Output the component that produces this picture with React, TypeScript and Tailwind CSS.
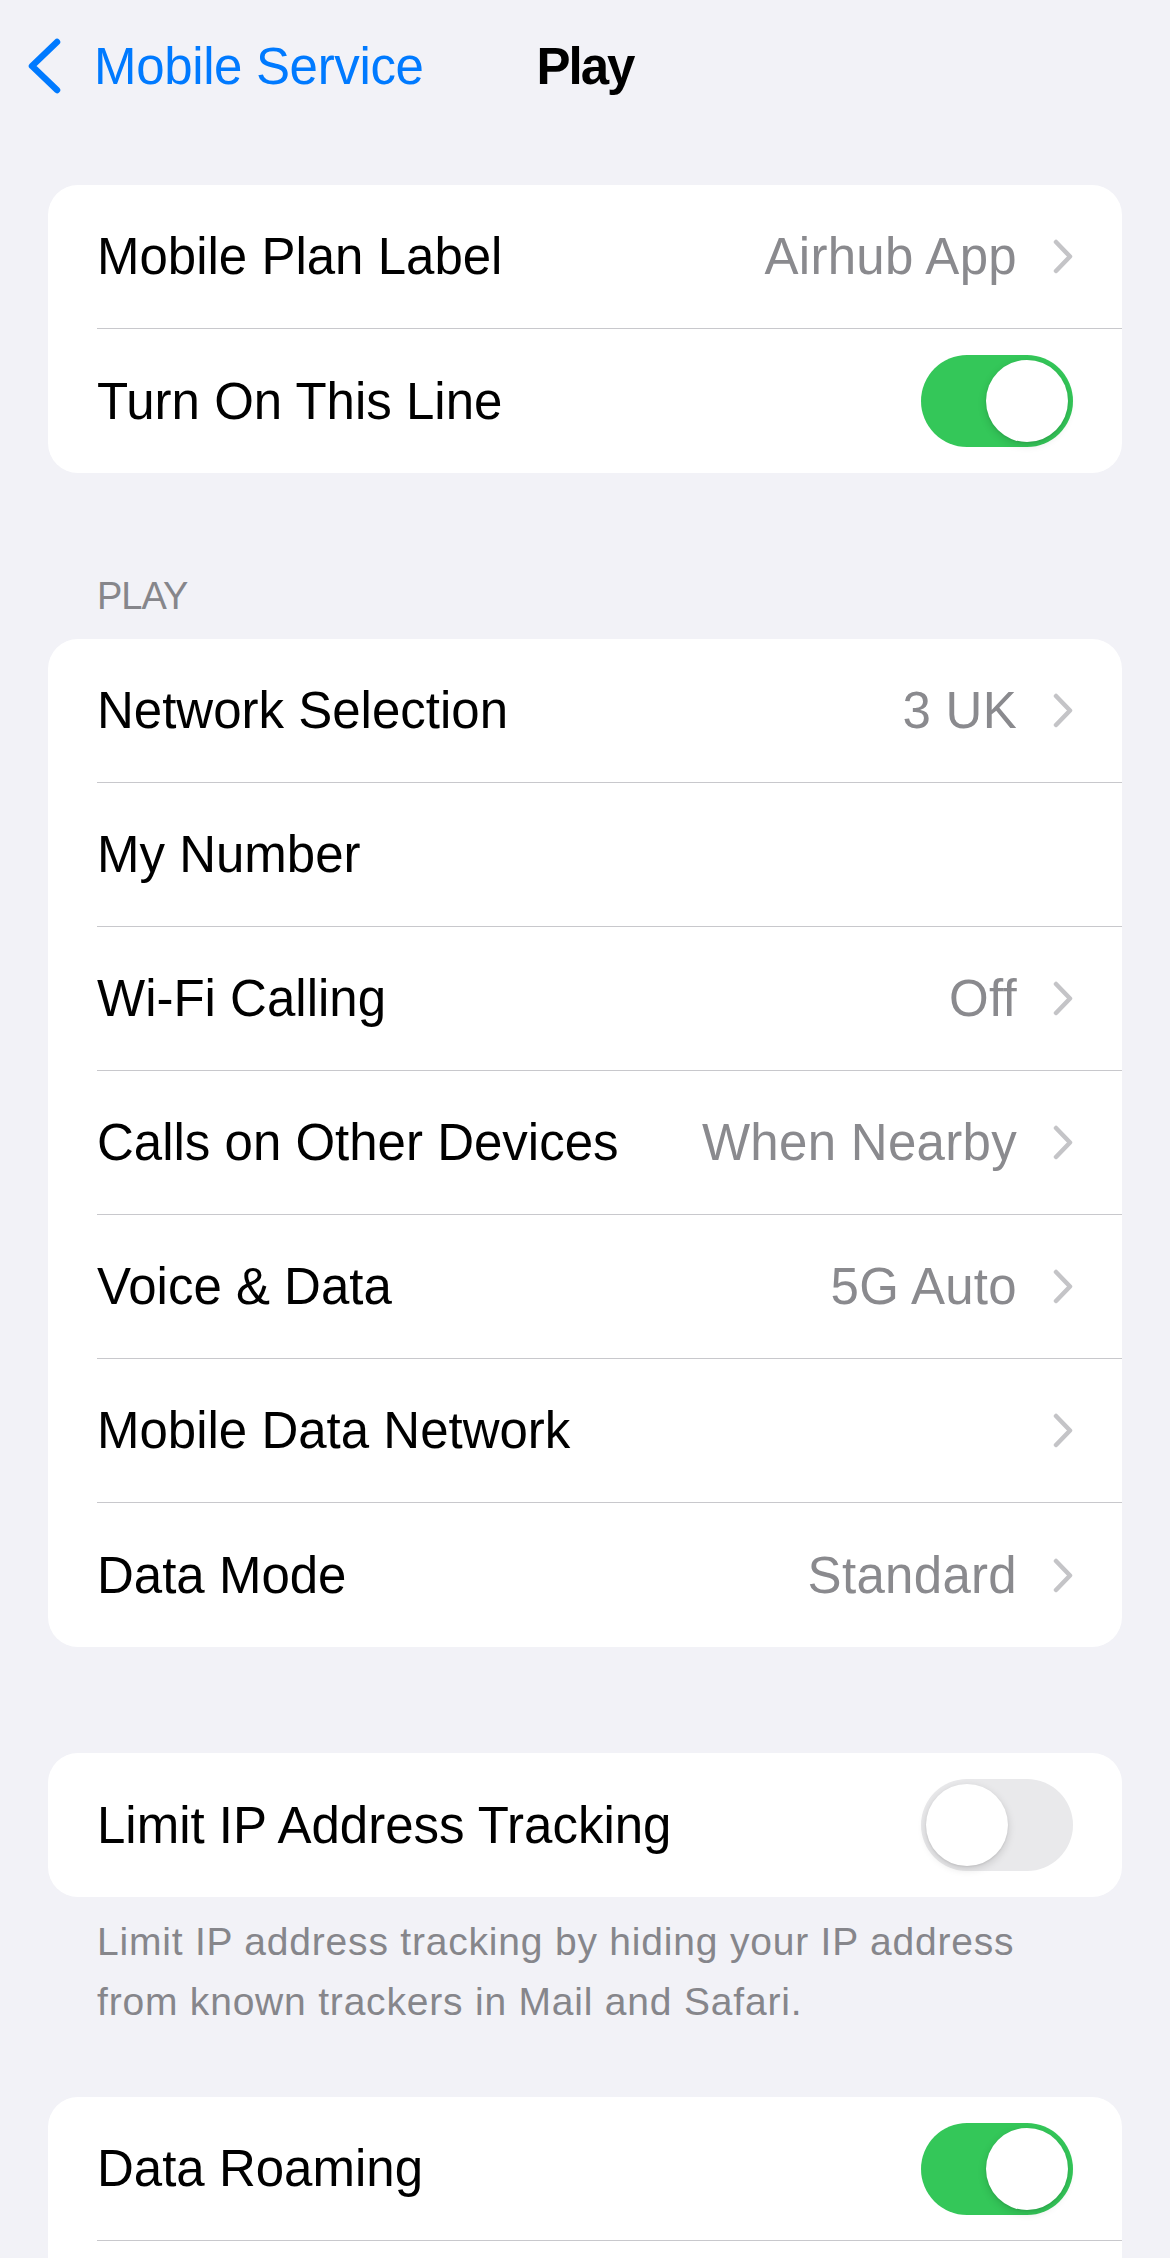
import type { ReactNode } from "react"

const font = { fontFamily: '"Liberation Sans", Arial, sans-serif' }

function Chevron() {
  return (
    <svg width="20" height="35" viewBox="0 0 20 35" fill="none" className="shrink-0">
      <path d="M3 3 L17 17.5 L3 32" stroke="#c4c4c7" strokeWidth="4.5" strokeLinecap="round" strokeLinejoin="round" />
    </svg>
  )
}

function Toggle({ on }: { on: boolean }) {
  return (
    <div
      className={`w-[152px] h-[92px] rounded-full p-[5px] flex shrink-0 ${
        on ? "bg-[#34c759] justify-end" : "bg-[#e9e9eb] justify-start"
      }`}
    >
      <div className="w-[82px] h-[82px] rounded-full bg-white shadow-[0_3px_8px_rgba(0,0,0,0.15),0_1px_2px_rgba(0,0,0,0.08)]" />
    </div>
  )
}

interface RowProps {
  label: string
  value?: string
  chevron?: boolean
  right?: ReactNode
  last?: boolean
}

function Row({ label, value, chevron, right, last }: RowProps) {
  return (
    <div className="pl-[49px]">
      <div
        className={`h-[144px] flex items-center justify-between pr-[49px] ${
          last ? "" : "border-b border-[#c8c8cc]"
        }`}
      >
        <span className="text-[51px] leading-none text-black">{label}</span>
        <div className="flex items-center gap-[36px]">
          {value && <span className="text-[51px] leading-none tracking-[0.3px] text-[#8a8a8e]">{value}</span>}
          {chevron && <Chevron />}
          {right}
        </div>
      </div>
    </div>
  )
}

function Card({ children, className = "" }: { children: ReactNode; className?: string }) {
  return <div className={`mx-[48px] bg-white rounded-[30px] overflow-hidden ${className}`}>{children}</div>
}

export default function App() {
  return (
    <div className="w-[1170px] min-h-[2258px] bg-[#f2f2f7]" style={font}>
      {/* nav bar */}
      <div className="h-[132px] grid grid-cols-[1fr_auto_1fr] items-center">
        <div className="flex items-center gap-[33px] pl-[27px]">
          <svg width="34" height="56" viewBox="0 0 34 56" fill="none">
            <path d="M30 4 L5 28 L30 52" stroke="#007aff" strokeWidth="6.5" strokeLinecap="round" strokeLinejoin="round" />
          </svg>
          <span className="text-[51px] leading-none tracking-[-0.35px] text-[#007aff]">Mobile Service</span>
        </div>
        <span className="text-[51px] leading-none font-bold tracking-[-2px] text-black">Play</span>
        <div />
      </div>

      <Card className="mt-[53px]">
        <Row label="Mobile Plan Label" value="Airhub App" chevron />
        <Row label="Turn On This Line" right={<Toggle on />} last />
      </Card>

      <div className="mt-[104px] pl-[97px] text-[38px] leading-none tracking-[-1px] text-[#86868b]">PLAY</div>

      <Card className="mt-[24px]">
        <Row label="Network Selection" value="3 UK" chevron />
        <Row label="My Number" />
        <Row label="Wi-Fi Calling" value="Off" chevron />
        <Row label="Calls on Other Devices" value="When Nearby" chevron />
        <Row label="Voice & Data" value="5G Auto" chevron />
        <Row label="Mobile Data Network" chevron />
        <Row label="Data Mode" value="Standard" chevron last />
      </Card>

      <Card className="mt-[106px]">
        <Row label="Limit IP Address Tracking" right={<Toggle on={false} />} last />
      </Card>

      <p className="mt-[15px] mx-[97px] text-[39px] leading-[60px] tracking-[0.8px] text-[#86868b]">
        Limit IP address tracking by hiding your IP address from known trackers in Mail and Safari.
      </p>

      <Card className="mt-[65px]">
        <Row label="Data Roaming" right={<Toggle on />} />
        <div className="h-[144px]" />
      </Card>
    </div>
  )
}
